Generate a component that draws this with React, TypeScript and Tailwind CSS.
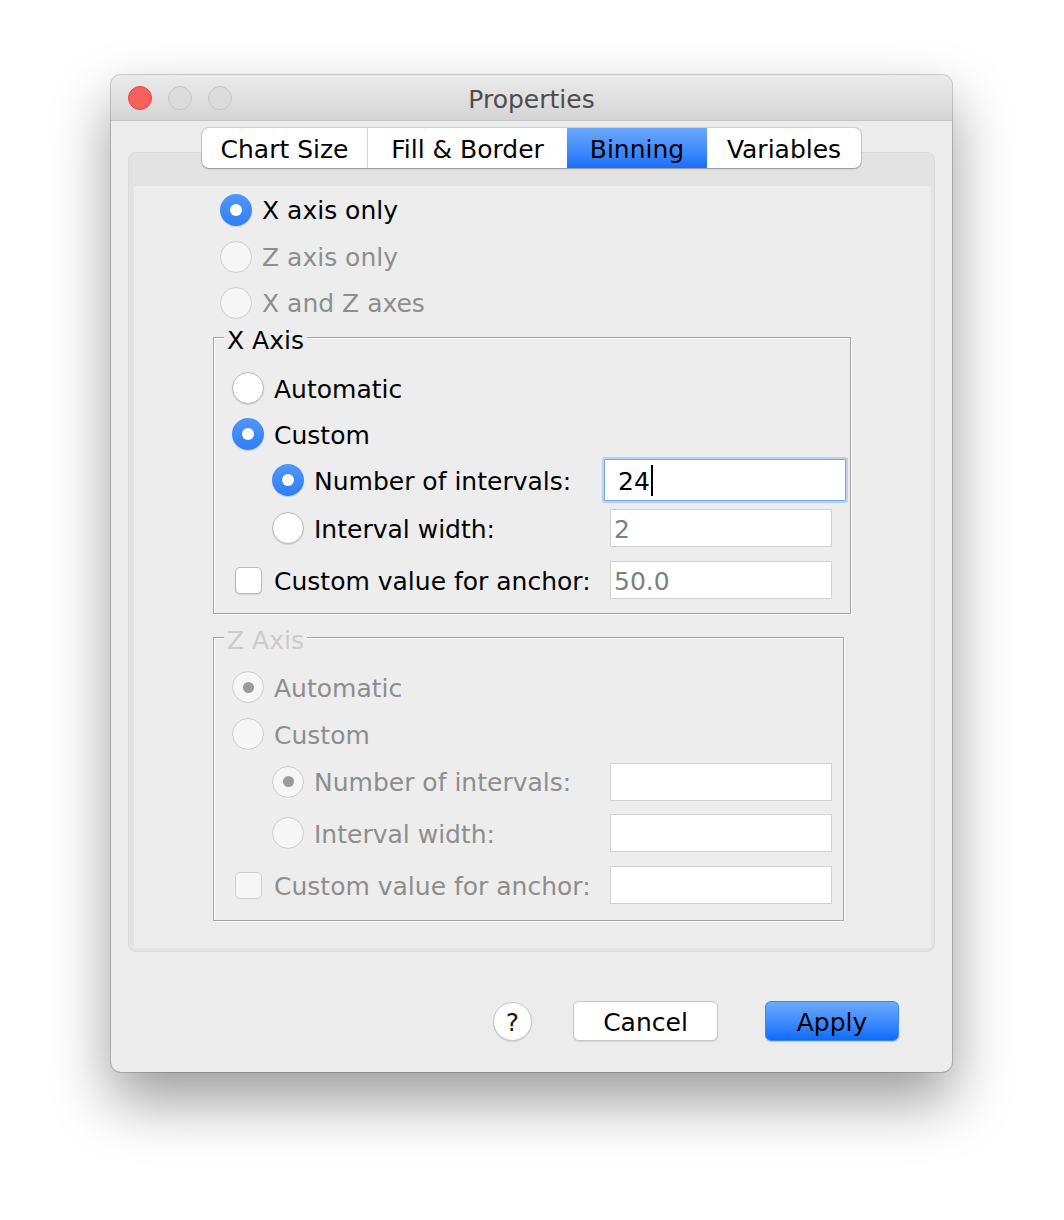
import * as React from "react"

type RadioProps = { checked?: boolean; disabled?: boolean }

function Radio({ checked, disabled }: RadioProps) {
  if (checked && !disabled) {
    return (
      <span className="flex h-[32px] w-[32px] shrink-0 items-center justify-center rounded-full bg-gradient-to-b from-[#5097f9] to-[#2f7ef6] shadow-[0_1px_1px_rgba(0,0,0,0.15)]">
        <span className="h-[12px] w-[12px] rounded-full bg-white" />
      </span>
    )
  }
  if (disabled) {
    return (
      <span className="flex h-[32px] w-[32px] shrink-0 items-center justify-center rounded-full border border-[#cdcdcd] bg-[#f6f6f6]">
        {checked && <span className="h-[11px] w-[11px] rounded-full bg-[#9a9a9a]" />}
      </span>
    )
  }
  return (
    <span className="h-[32px] w-[32px] shrink-0 rounded-full border border-[#b9b9b9] bg-white shadow-[0_1px_1px_rgba(0,0,0,0.12)]" />
  )
}

function Checkbox({ disabled }: { disabled?: boolean }) {
  return (
    <span
      className={
        disabled
          ? "h-[27px] w-[27px] shrink-0 rounded-[5px] border border-[#cdcdcd] bg-[#f6f6f6]"
          : "h-[27px] w-[27px] shrink-0 rounded-[5px] border border-[#b9b9b9] bg-white shadow-[0_1px_1px_rgba(0,0,0,0.12)]"
      }
    />
  )
}

function Field({ value, focused }: { value?: string; focused?: boolean }) {
  if (focused) {
    return (
      <div className="-ml-[6px] flex h-[42px] w-[242px] items-center rounded-[1px] border border-[#79a9ec] bg-white pl-[13px] shadow-[0_0_0_2px_rgba(140,185,240,0.55)]">
        <span className="pt-[2px] leading-none text-black">{value}</span>
        <span className="ml-[1px] h-[31px] w-[2px] bg-black" />
      </div>
    )
  }
  return (
    <div className="flex h-[38px] w-[222px] items-center border border-[#d2d2d2] bg-white pl-[3px]">
      <span className="pt-[2px] leading-none text-[#7f7f7f]">{value}</span>
    </div>
  )
}

function OptionRow({
  h,
  indent,
  control,
  label,
  disabled,
  field,
}: {
  h: string
  indent?: boolean
  control: React.ReactNode
  label: string
  disabled?: boolean
  field?: React.ReactNode
}) {
  return (
    <div className={`flex items-center ${h}`}>
      <div className={`flex flex-1 items-center ${indent ? "pl-[40px]" : ""}`}>
        {control}
        <span className={`ml-[10px] pt-[2px] leading-none ${disabled ? "text-[#8e8e8e]" : "text-black"}`}>
          {label}
        </span>
      </div>
      {field && <div className="w-[222px]">{field}</div>}
    </div>
  )
}

function AxisGroup({
  title,
  disabled,
  width,
  rows,
}: {
  title: string
  disabled?: boolean
  width: string
  rows: string[]
}) {
  const d = disabled
  return (
    <div
      className={`relative border border-[#a4a4a4] shadow-[1px_1px_0_#ffffff,inset_1px_1px_0_#ffffff] ${width} ${
        d ? "pb-[11px] pl-[18px] pr-[11px] pt-[26px]" : "pb-[6px] pl-[18px] pr-[18px] pt-[27px]"
      }`}
    >
      <span
        className={`absolute left-[10px] top-[-10px] bg-[#ededed] px-[3px] leading-[26px] ${
          d ? "text-[#cbcbcb]" : "text-black"
        }`}
      >
        {title}
      </span>
      <OptionRow h={rows[0]} control={<Radio checked={d} disabled={d} />} label="Automatic" disabled={d} />
      <OptionRow h={rows[1]} control={<Radio checked={!d} disabled={d} />} label="Custom" disabled={d} />
      <OptionRow
        h={rows[2]}
        indent
        control={<Radio checked disabled={d} />}
        label="Number of intervals:"
        disabled={d}
        field={d ? <Field /> : <Field value="24" focused />}
      />
      <OptionRow
        h={rows[3]}
        indent
        control={<Radio disabled={d} />}
        label="Interval width:"
        disabled={d}
        field={<Field value={d ? undefined : "2"} />}
      />
      <OptionRow
        h={rows[4]}
        control={
          <span className="flex w-[32px] justify-center">
            <Checkbox disabled={d} />
          </span>
        }
        label="Custom value for anchor:"
        disabled={d}
        field={<Field value={d ? undefined : "50.0"} />}
      />
    </div>
  )
}

const tabs = [
  { label: "Chart Size", w: "w-[165px]" },
  { label: "Fill & Border", w: "w-[200px]" },
  { label: "Binning", w: "w-[140px]", active: true },
  { label: "Variables", w: "w-[154px]" },
]

export default function App() {
  return (
    <div className="min-h-[1220px] bg-white pl-[111px] pt-[75px] font-['DejaVu_Sans',sans-serif] text-[25px]">
      <div className="flex h-[997px] w-[841px] flex-col rounded-[10px] bg-[#ececec] shadow-[0_0_0_1px_rgba(0,0,0,0.18),0_28px_60px_rgba(0,0,0,0.4)]">
        {/* Title bar */}
        <div className="relative flex h-[46px] shrink-0 items-center justify-center rounded-t-[10px] border-b border-[#c4c4c4] bg-gradient-to-b from-[#ebebeb] to-[#d5d5d5]">
          <div className="absolute left-[17px] top-[11px] flex gap-[16px]">
            <span className="h-[24px] w-[24px] rounded-full border border-[#e0443e] bg-[#fc605c]" />
            <span className="h-[24px] w-[24px] rounded-full border border-[#c6c6c6] bg-[#dcdcdc]" />
            <span className="h-[24px] w-[24px] rounded-full border border-[#c6c6c6] bg-[#dcdcdc]" />
          </div>
          <span className="pt-[3px] leading-none text-[#4d4d4d]">Properties</span>
        </div>

        {/* Body */}
        <div className="flex flex-1 flex-col px-[17px] pt-[7px]">
          <div className="relative z-10 flex justify-center">
            <div className="flex h-[40px] overflow-hidden rounded-[7px] bg-white shadow-[0_0_0_1px_rgba(0,0,0,0.12),0_1px_1.5px_rgba(0,0,0,0.25)]">
              {tabs.map((t, i) => (
                <div
                  key={t.label}
                  className={`flex items-center justify-center ${t.w} ${i > 0 && !t.active && !tabs[i - 1].active ? "border-l border-[#d4d4d4]" : ""} ${
                    t.active ? "bg-gradient-to-b from-[#6ca8fc] to-[#1670fa]" : ""
                  }`}
                >
                  <span className="pt-[3px] leading-none text-black">{t.label}</span>
                </div>
              ))}
            </div>
          </div>

          {/* Tab pane */}
          <div className="-mt-[16px] h-[800px] rounded-[8px] border border-[#dadada] bg-[#e3e3e3] pb-[3px] pl-[5px] pr-[3px] pt-[33px]">
            <div className="h-full bg-[#ededed] pl-[79px]">
              <div className="ml-[7px] flex flex-col">
                <div className="flex h-[47px] items-center">
                  <Radio checked />
                  <span className="ml-[10px] pt-[2px] leading-none text-black">X axis only</span>
                </div>
                <div className="flex h-[47px] items-center">
                  <Radio disabled />
                  <span className="ml-[10px] pt-[2px] leading-none text-[#8e8e8e]">Z axis only</span>
                </div>
                <div className="flex h-[45px] items-center">
                  <Radio disabled />
                  <span className="ml-[10px] pt-[2px] leading-none text-[#8e8e8e]">X and Z axes</span>
                </div>
              </div>

              <div className="mt-[12px]">
                <AxisGroup
                  title="X Axis"
                  width="w-[638px]"
                  rows={["h-[46px]", "h-[46px]", "h-[46px]", "h-[50px]", "h-[54px]"]}
                />
              </div>
              <div className="mt-[23px]">
                <AxisGroup
                  title="Z Axis"
                  disabled
                  width="w-[631px]"
                  rows={["h-[46px]", "h-[48px]", "h-[47px]", "h-[56px]", "h-[48px]"]}
                />
              </div>
            </div>
          </div>

          {/* Buttons */}
          <div className="mt-[49px] flex items-center justify-end pr-[36px]">
            <div className="flex h-[39px] w-[39px] items-center justify-center rounded-full border border-[#c6c6c6] bg-white shadow-[0_1px_1px_rgba(0,0,0,0.12)]">
              <span className="pt-[2px] leading-none text-[#1a1a1a]">?</span>
            </div>
            <div className="ml-[41px] flex h-[40px] w-[145px] items-center justify-center rounded-[6px] border border-[#c8c8c8] bg-white shadow-[0_1px_1px_rgba(0,0,0,0.1)]">
              <span className="pt-[2px] leading-none text-black">Cancel</span>
            </div>
            <div className="ml-[47px] flex h-[40px] w-[134px] items-center justify-center rounded-[6px] border border-[#3d84f5] bg-gradient-to-b from-[#6aa9fc] to-[#0c6bfb] shadow-[0_1px_1px_rgba(0,0,0,0.15)]">
              <span className="pt-[2px] leading-none text-black">Apply</span>
            </div>
          </div>
        </div>
      </div>
    </div>
  )
}
